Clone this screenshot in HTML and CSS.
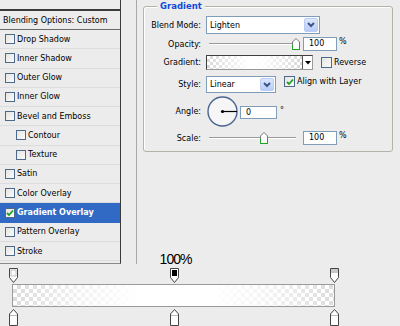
FILE: index.html
```html
<!DOCTYPE html>
<html lang="en">
  <head>
    <meta charset="UTF-8">
    <title>Layer Style - Gradient Overlay</title>
    <link rel="stylesheet" href="styles.css">
  </head>
  <body>
    <div class="main">
      <div class="styles-list">
        <div class="row head"></div>
        <div class="row title">Blending Options: Custom</div>
        <div class="row"><span class="cb"></span>Drop Shadow</div>
        <div class="row"><span class="cb"></span>Inner Shadow</div>
        <div class="row"><span class="cb"></span>Outer Glow</div>
        <div class="row"><span class="cb"></span>Inner Glow</div>
        <div class="row"><span class="cb"></span>Bevel and Emboss</div>
        <div class="row sub"><span class="cb"></span>Contour</div>
        <div class="row sub"><span class="cb"></span>Texture</div>
        <div class="row"><span class="cb"></span>Satin</div>
        <div class="row"><span class="cb"></span>Color Overlay</div>
        <div class="row on">
          <span class="cb"><svg width="8" height="8" viewBox="0 0 8 8"><path d="M1 4 L3 6 L7 1.5" fill="none" stroke="#21a121" stroke-width="1.8"/></svg></span>Gradient Overlay
        </div>
        <div class="row"><span class="cb"></span>Pattern Overlay</div>
        <div class="row"><span class="cb"></span>Stroke</div>
      </div>

      <div class="divider"></div>

      <div class="options">
        <div class="group">
          <div class="group-title">Gradient</div>

          <div class="field f-blend">
            <label>Blend Mode:</label>
            <div class="select blend">Lighten
              <span class="drop"><svg width="8" height="6" viewBox="0 0 8 6"><polyline points="1,1 4,4 7,1" fill="none" stroke="#3d5588" stroke-width="2"/></svg></span>
            </div>
          </div>

          <div class="field f-opacity">
            <label>Opacity:</label>
            <div class="slider">
              <span class="track"></span>
              <span class="thumb" style="left: 100%"><svg width="8" height="12" viewBox="0 0 8 12"><path d="M4 .5 L7.5 4 V11.5 H.5 V4 Z" fill="#fff" stroke="#777"/><path d="M.5 7 V11.5 H7.5 V7" fill="none" stroke="#1fa31f"/></svg></span>
            </div>
            <div class="num">100</div><span class="unit">%</span>
          </div>

          <div class="field f-gradient">
            <label>Gradient:</label>
            <div class="preview"><span class="ramp-mini"></span><span class="arrow"><svg width="6" height="4" viewBox="0 0 6 4"><path d="M0 0 H6 L3 3.5 Z" fill="#000"/></svg></span></div>
            <span class="cb"></span><span class="cb-label">Reverse</span>
          </div>

          <div class="field f-style">
            <label>Style:</label>
            <div class="select style">Linear
              <span class="drop"><svg width="8" height="6" viewBox="0 0 8 6"><polyline points="1,1 4,4 7,1" fill="none" stroke="#3d5588" stroke-width="2"/></svg></span>
            </div>
            <span class="cb"><svg width="8" height="8" viewBox="0 0 8 8"><path d="M1 4 L3 6 L7 1.5" fill="none" stroke="#21a121" stroke-width="1.8"/></svg></span><span class="cb-label">Align with Layer</span>
          </div>

          <div class="field f-angle">
            <label>Angle:</label>
            <svg class="dial" width="31" height="31" viewBox="0 0 31 31">
              <circle cx="15.5" cy="15.5" r="14.5" fill="#f6f6f6" stroke="#4a6590" stroke-width="1.4"/>
              <line x1="15.5" y1="15.5" x2="30" y2="15.5" stroke="#000" stroke-width="1.2"/>
              <circle cx="15.5" cy="15.5" r="1.6" fill="#000"/>
            </svg>
            <div class="num angle">0</div><span class="unit deg">°</span>
          </div>

          <div class="field f-scale">
            <label>Scale:</label>
            <div class="slider">
              <span class="track"></span>
              <span class="thumb" style="left: 63%"><svg width="8" height="12" viewBox="0 0 8 12"><path d="M4 .5 L7.5 4 V11.5 H.5 V4 Z" fill="#fff" stroke="#777"/><path d="M.5 7 V11.5 H7.5 V7" fill="none" stroke="#1fa31f"/></svg></span>
            </div>
            <div class="num">100</div><span class="unit">%</span>
          </div>
        </div>
      </div>
    </div>

    <div class="editor">
      <div class="pct">100%</div>
      <div class="stops top">
        <svg class="stop" style="left: 0%" width="9" height="15" viewBox="0 0 9 15"><path d="M.5 .5 H8.5 V9.5 L4.5 14.5 L.5 9.5 Z" fill="#fff" stroke="#444"/><rect x="2" y="2" width="5" height="6" fill="#fff" stroke="#999" stroke-width=".6"/></svg>
        <svg class="stop" style="left: 50%" width="9" height="15" viewBox="0 0 9 15"><path d="M.5 .5 H8.5 V9.5 L4.5 14.5 L.5 9.5 Z" fill="#fff" stroke="#444"/><rect x="2" y="2" width="5" height="6" fill="#000"/></svg>
        <svg class="stop" style="left: 100%" width="9" height="15" viewBox="0 0 9 15"><path d="M.5 .5 H8.5 V9.5 L4.5 14.5 L.5 9.5 Z" fill="#fff" stroke="#444"/><rect x="1" y="1" width="7" height="4" fill="#c8c8c8"/></svg>
      </div>
      <div class="bar"></div>
      <div class="stops bottom">
        <svg class="stop" style="left: 0%" width="9" height="17" viewBox="0 0 9 17"><path d="M4.5 .5 L8.5 5 V16.5 H.5 V5 Z" fill="#fff" stroke="#444"/><path d="M1 6.5 H8" stroke="#bbb"/></svg>
        <svg class="stop" style="left: 50%" width="9" height="17" viewBox="0 0 9 17"><path d="M4.5 .5 L8.5 5 V16.5 H.5 V5 Z" fill="#fff" stroke="#444"/><path d="M1 6.5 H8" stroke="#bbb"/></svg>
        <svg class="stop" style="left: 100%" width="9" height="17" viewBox="0 0 9 17"><path d="M4.5 .5 L8.5 5 V16.5 H.5 V5 Z" fill="#fff" stroke="#444"/><path d="M1 6.5 H8" stroke="#bbb"/></svg>
      </div>
    </div>
  </body>
</html>
```

FILE: styles.css
```css
html, body {
  margin: 0;
  padding: 0;
}
body {
  width: 400px;
  height: 326px;
  overflow: hidden;
  background: #ececec;
  font-family: "DejaVu Sans", sans-serif;
  font-size: 8px;
  color: #000;
}

.main {
  display: flex;
  height: 264px;
}

/* left list of layer styles */
.styles-list {
  width: 121px;
  height: 264px;
  box-sizing: border-box;
  border-right: 1px solid #3a3a3a;
  border-bottom: 1px solid #8a8a8a;
  overflow: hidden;
}
.row {
  display: flex;
  align-items: center;
  gap: 2px;
  height: 19.27px;
  box-sizing: border-box;
  padding-left: 5px;
  border-bottom: 1px solid #dcdcdc;
  white-space: nowrap;
}
.row.head {
  height: 11px;
  padding-left: 0;
  border-bottom: 2px solid #3a3a3a;
}
.row.title {
  height: 19px;
  padding-left: 3px;
  border-bottom: 1px solid #6a6a6a;
}
.row.sub {
  padding-left: 16px;
}
.row.on {
  background: #316ac5;
  color: #fff;
  font-weight: bold;
  border-bottom-color: #316ac5;
}

.cb {
  display: inline-flex;
  align-items: center;
  justify-content: center;
  width: 10px;
  height: 10px;
  box-sizing: border-box;
  border: 1px solid #4d6a8c;
  background: linear-gradient(135deg, #e4e4e0, #fbfbfb);
  flex: none;
}

.divider {
  margin-left: 15px;
  border-left: 1px solid #a9a9a9;
}

/* options */
.options {
  padding-left: 6px;
}
.group {
  width: 250px;
  height: 146px;
  box-sizing: border-box;
  margin-top: 6px;
  border: 1px solid #b3b3a8;
  border-radius: 3px;
  box-shadow: inset 1px 1px 0 #fff;
}
.group-title {
  width: fit-content;
  margin: -6px 0 0 13px;
  padding: 0 3px;
  height: 11px;
  line-height: 11px;
  background: #ececec;
  color: #1149d6;
  font-weight: bold;
  font-size: 8.5px;
}

.field {
  display: flex;
  align-items: center;
}
.field label {
  width: 57px;
  margin-right: 5px;
  text-align: right;
  flex: none;
}
.f-blend { margin-top: 4px; height: 18px; }
.f-opacity { margin-top: 3px; height: 14px; }
.f-gradient { margin-top: 4px; height: 15px; }
.f-style { margin-top: 6px; height: 17px; }
.f-angle { margin-top: 3px; height: 31px; }
.f-scale { margin-top: 4px; height: 14px; }

.select {
  display: flex;
  align-items: center;
  height: 100%;
  box-sizing: border-box;
  border: 1px solid #7f9db9;
  background: #fff;
  padding-left: 3px;
}
.select.blend { width: 114px; }
.select.style { width: 70px; }
.drop {
  margin-left: auto;
  margin-right: 1px;
  width: 14px;
  height: calc(100% - 2px);
  box-sizing: border-box;
  border: 1px solid #b8ccf4;
  border-radius: 2px;
  background: linear-gradient(#dce7fd, #b9cdf8);
  display: flex;
  align-items: center;
  justify-content: center;
}

.slider {
  position: relative;
  width: 87px;
  height: 100%;
  margin-left: 3px;
}
.track {
  position: absolute;
  left: 0;
  right: 0;
  top: 6px;
  height: 2px;
  box-sizing: border-box;
  border-top: 1px solid #9a9a9a;
  border-bottom: 1px solid #fff;
}
.thumb {
  position: absolute;
  top: 1px;
  margin-left: -4px;
  line-height: 0;
}

.num {
  width: 34px;
  height: 14px;
  box-sizing: border-box;
  border: 1px solid #7f9db9;
  background: #fff;
  padding-left: 5px;
  line-height: 12px;
  margin-left: 7px;
}
.unit {
  margin-left: 2px;
  align-self: flex-start;
}

.preview {
  display: flex;
  width: 107px;
  height: 15px;
  box-sizing: border-box;
  border: 1px solid #404040;
  border-right-color: #999;
  border-bottom-color: #999;
  background: #fff;
}
.ramp-mini {
  flex: 1;
  background:
    linear-gradient(to right, rgba(255,255,255,0) 0%, #fff 45%, rgba(255,255,255,.9) 60%, rgba(255,255,255,0) 100%),
    conic-gradient(#d8d8d8 25%, #fff 0 50%, #d8d8d8 0 75%, #fff 0) 0 0 / 6px 6px;
}
.arrow {
  width: 9px;
  border-left: 1px solid #555;
  display: flex;
  align-items: center;
  justify-content: center;
  background: #fff;
}
.f-gradient .cb {
  width: 11px;
  height: 11px;
  margin-left: 8px;
}
.cb-label {
  margin-left: 2px;
}
.f-style .cb {
  width: 11px;
  height: 11px;
  margin-left: 8px;
  align-self: flex-start;
}
.f-style .cb-label {
  align-self: flex-start;
  margin-top: 1px;
}

.dial {
  margin-left: 1px;
}
.num.angle {
  width: 37px;
  height: 13px;
  line-height: 11px;
  margin-left: 2px;
  margin-top: 2px;
}
.unit.deg {
  margin-left: 3px;
  margin-top: 10px;
}

/* gradient editor */
.editor {
  margin-top: -12px;
  padding-left: 12px;
}
.pct {
  width: 323px;
  padding-left: 4px;
  box-sizing: border-box;
  text-align: center;
  font-family: "Liberation Sans", Arial, sans-serif;
  font-size: 14px;
  letter-spacing: -1px;
  line-height: 14px;
  height: 14px;
}
.stops {
  position: relative;
  width: 321px;
  margin-left: 1px;
}
.stops.top {
  height: 15px;
  margin-top: 2px;
  margin-bottom: 1px;
}
.stops.bottom {
  height: 17px;
  margin-top: 2px;
}
.stop {
  position: absolute;
  top: 0;
  margin-left: -4px;
}
.bar {
  width: 323px;
  height: 23px;
  box-sizing: border-box;
  border: 1px solid #9a9a9a;
  background:
    linear-gradient(to right, rgba(255,255,255,0) 0%, rgba(255,255,255,.6) 20%, #fff 40%, #fff 62%, rgba(255,255,255,.6) 82%, rgba(255,255,255,0) 100%),
    conic-gradient(#dcdcdc 25%, #fff 0 50%, #dcdcdc 0 75%, #fff 0) 0 0 / 8px 8px;
}
```
